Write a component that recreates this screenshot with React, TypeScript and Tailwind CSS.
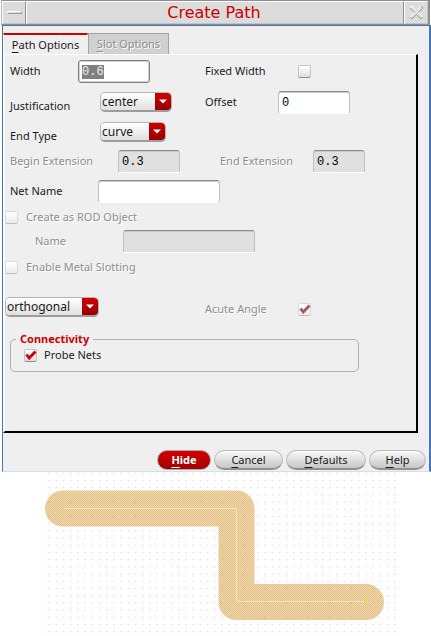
import { useEffect, useRef } from "react";
import type { ReactNode } from "react";

const fieldBase =
  "block rounded-[3px] border border-t-[#8e8e8e] border-x-[#c0c0c0] border-b-white px-[3px] pt-[2px] font-['Liberation_Mono','DejaVu_Sans_Mono',monospace] text-[12px] leading-4 text-black shadow-[inset_0_1px_0_#c9c9c9] outline-none h-[23px]";

function TextField({ id, value, className, disabled }: { id: string; value: string; className: string; disabled?: boolean }) {
  return (
    <input
      id={id}
      type="text"
      defaultValue={value}
      disabled={disabled}
      className={`${fieldBase} ${disabled ? "bg-[#e0e0e0]" : "bg-white"} ${className}`}
    />
  );
}

function Combo({ id, options, className, label }: { id: string; options: string[]; className: string; label?: string }) {
  return (
    <div className={`relative h-5 overflow-hidden rounded-[5px] border border-b-2 border-[#b4b4b4] border-b-[#9c9c9c] ${className}`}>
      <select
        id={id}
        aria-label={label}
        className="block h-full w-full appearance-none bg-linear-to-b from-white to-[#e0e0e0] pl-px text-[12px] leading-4 text-[#1a1a1a] outline-none"
      >
        {options.map((o) => (
          <option key={o}>{o}</option>
        ))}
      </select>
      <span className="pointer-events-none absolute inset-y-0 right-0 flex w-4 items-center justify-center bg-linear-to-b from-[#cf0000] to-[#980000]">
        <svg width="8" height="5" viewBox="0 0 8 5" aria-hidden="true">
          <path d="M0 0.5h8L4 4.5z" fill="#fff" />
        </svg>
      </span>
    </div>
  );
}

function Check({ id, checked, disabled }: { id: string; checked?: boolean; disabled?: boolean }) {
  return (
    <span className="relative block size-[13px] shrink-0">
      <input
        id={id}
        type="checkbox"
        defaultChecked={checked}
        disabled={disabled}
        className="peer block size-full appearance-none rounded-[2px] border border-[#c4c4c4] border-b-[#8f8f8f] bg-linear-to-b from-white to-[#dedede] disabled:border-[#dadada] disabled:border-b-[#bdbdbd] disabled:to-[#ececec]"
      />
      <svg
        viewBox="0 0 13 13"
        aria-hidden="true"
        className={`pointer-events-none absolute inset-0 hidden peer-checked:block ${disabled ? "text-[#a65a5a]" : "text-[#cc0000]"}`}
      >
        <path d="M2.5 5.5 5.2 9 11.5 2.5" fill="none" stroke="currentColor" strokeWidth="2.8" />
      </svg>
    </span>
  );
}

function Label({ htmlFor, className = "", dim, children }: { htmlFor: string; className?: string; dim?: boolean; children: ReactNode }) {
  return (
    <label
      htmlFor={htmlFor}
      className={`shrink-0 whitespace-nowrap ${dim ? "text-[#8e8e8e] [text-shadow:1px_1px_0_#fff]" : "text-[#1a1a1a]"} ${className}`}
    >
      {children}
    </label>
  );
}

function Mnemonic({ text }: { text: string }) {
  return (
    <span>
      <span className="underline underline-offset-3">{text[0]}</span>
      {text.slice(1)}
    </span>
  );
}

function PushButton({ text, className }: { text: string; className: string }) {
  return (
    <button
      type="button"
      className={`h-5 rounded-full border border-b-2 border-[#bcbcbc] border-b-[#909090] bg-linear-to-b from-[#fafafa] to-[#c6c6c6] text-[#1a1a1a] ${className}`}
    >
      <Mnemonic text={text} />
    </button>
  );
}

function TitleBar() {
  return (
    <header className="ml-px mr-px flex h-[25px] border border-t border-r-2 border-[#8f8f8f] border-l-[#b5b5b5] bg-[#dcdcdc]">
      <button type="button" aria-label="Window menu" className="flex w-6 items-center justify-center border border-t-white border-l-white border-r-[#8f8f8f] border-b-[#c4c4c4]">
        <span className="h-[3px] w-[15px] border border-t-white border-l-white border-r-[#999] border-b-[#999]" />
      </button>
      <h1 className="flex flex-1 items-center justify-center border border-t-white border-l-white border-r-[#8f8f8f] border-b-[#c4c4c4] pr-[2px] font-['DejaVu_Sans',sans-serif] text-[16px] leading-5 text-[#cc0000]">
        Create Path
      </h1>
      <button type="button" aria-label="Close" className="flex w-6 items-center justify-center border border-t-white border-l-white border-r-[#c4c4c4] border-b-[#c4c4c4]">
        <svg width="15" height="15" viewBox="0 0 15 15" aria-hidden="true">
          <path d="M1 3 3 1 7.5 5.5 12 1 14 3 9.5 7.5 14 12 12 14 7.5 9.5 3 14 1 12 5.5 7.5z" fill="#dcdcdc" stroke="#999" />
          <path d="M1 3 3 1 7.5 5.5 12 1M5.5 7.5 1 12M9.5 7.5 14 12" fill="none" stroke="#fff" />
        </svg>
      </button>
    </header>
  );
}

function LayoutCanvas() {
  return (
    <svg viewBox="0 472 431 164" className="block h-auto w-full" role="img" aria-label="Routed path">
      <defs>
        <pattern id="grid" x="48.5" y="472.7" width="7.2" height="7.2" patternUnits="userSpaceOnUse">
          <rect width="1.1" height="1.1" fill="#d2d2d2" />
        </pattern>
        <pattern id="griddark" x="48.5" y="472.7" width="21.6" height="14.4" patternUnits="userSpaceOnUse">
          <rect width="1.1" height="1.1" fill="#c9a873" />
        </pattern>
        <pattern id="metal" width="2" height="2" patternUnits="userSpaceOnUse">
          <rect width="2" height="2" fill="#f0d5a8" />
          <rect width="1" height="1" fill="#e4c28c" />
          <rect x="1" y="1" width="1" height="1" fill="#e4c28c" />
        </pattern>
      </defs>
      <rect x="44" y="472" width="352" height="164" fill="#fefefe" />
      <rect x="48" y="472" width="348" height="160" fill="url(#grid)" />
      <path d="M63 508.500H236.500V602H366" fill="none" stroke="url(#metal)" strokeWidth="36" strokeLinecap="round" strokeLinejoin="round" />
      <path d="M63 508.500H236.500V602H366" fill="none" stroke="url(#griddark)" strokeWidth="34" strokeLinecap="round" strokeLinejoin="round" />
      <path d="M63 508.500H236.500V601.500H366" fill="none" stroke="#f9e4c0" strokeWidth="1" />
      <path d="M364 601.500h4M366 600v3" stroke="#f0dc3c" strokeWidth="1.500" />
    </svg>
  );
}

export default function App() {
  const widthRef = useRef<HTMLInputElement>(null);
  useEffect(() => {
    widthRef.current?.focus();
    widthRef.current?.select();
  }, []);

  return (
    <div className="min-h-screen bg-white font-['Noto_Sans','Open_Sans',sans-serif] text-[11px] leading-4">
      <TitleBar />
      <main className="ml-[2px] border-t border-r-2 border-b border-l border-[#4677b5] border-b-[#d3dff0] bg-[#efefef]">
        <div className="flex pt-[7px]" role="tablist">
          <button type="button" role="tab" aria-selected="true" className="h-[21px] w-[85px] border-x border-t-2 border-t-[#cc0000] border-r-transparent border-l-white text-[#1a1a1a]">
            <Mnemonic text="Path Options" />
          </button>
          <button type="button" role="tab" aria-selected="false" disabled className="h-[21px] w-[81px] border border-b-0 border-[#a3a3a3] bg-[#d0d0d0] text-[#8e8e8e] [text-shadow:1px_1px_0_#fff]">
            <Mnemonic text="Slot Options" />
          </button>
        </div>

        <section className="mr-[11px] border-2 border-t border-white border-r-black border-b-black pb-[59px]">
          <div className="flex h-8 items-center pl-[5px]">
            <Label htmlFor="width" className="w-[68px]">Width</Label>
            <input
              id="width"
              ref={widthRef}
              type="text"
              defaultValue="0.6"
              className="block h-[23px] w-[72px] rounded-[3px] border border-[#808080] bg-white px-[3px] pt-[2px] font-['Liberation_Mono','DejaVu_Sans_Mono',monospace] text-[12px] leading-4 text-black shadow-[inset_0_0_0_1px_#d0d0d0] outline-none selection:bg-[#808080] selection:text-[#e4f0f0]"
            />
            <Label htmlFor="fixed" className="ml-[55px] w-[93px]">Fixed Width</Label>
            <Check id="fixed" />
          </div>
          <div className="flex h-[30px] items-center pl-[5px]">
            <Label htmlFor="just" className="w-[90px] pt-2">Justification</Label>
            <Combo id="just" options={["center", "left", "right"]} className="w-[72px]" />
            <Label htmlFor="offset" className="ml-[33px] w-[73px]">Offset</Label>
            <TextField id="offset" value="0" className="w-[72px]" />
          </div>
          <div className="flex h-[30px] items-center pl-[5px]">
            <Label htmlFor="end" className="w-[90px] pt-2">End Type</Label>
            <Combo id="end" options={["curve", "flush", "square"]} className="w-[66px]" />
          </div>
          <div className="flex h-7 items-center pl-[5px]">
            <Label htmlFor="begin-ext" dim className="w-[108px]">Begin Extension</Label>
            <TextField id="begin-ext" value="0.3" disabled className="w-[62px]" />
            <Label htmlFor="end-ext" dim className="ml-10 w-[93px]">End Extension</Label>
            <TextField id="end-ext" value="0.3" disabled className="w-[52px]" />
          </div>
          <div className="flex h-8 items-center pl-[5px]">
            <Label htmlFor="net" className="w-[88px]">Net Name</Label>
            <TextField id="net" value="" className="w-[122px]" />
          </div>
          <div className="flex h-5 items-center gap-2">
            <Check id="rod" disabled />
            <Label htmlFor="rod" dim>Create as ROD Object</Label>
          </div>
          <div className="flex h-7 items-center pl-[30px]">
            <Label htmlFor="rod-name" dim className="w-[88px]">Name</Label>
            <TextField id="rod-name" value="" disabled className="w-[132px]" />
          </div>
          <div className="flex h-6 items-center gap-2">
            <Check id="slotting" disabled />
            <Label htmlFor="slotting" dim>Enable Metal Slotting</Label>
          </div>
          <div className="mt-4 flex h-6 items-center">
            <Combo id="snap" label="Snap mode" options={["orthogonal", "diagonal", "anyAngle"]} className="w-[94px]" />
            <div className="ml-[106px] flex items-center pt-1">
              <Label htmlFor="acute" dim className="w-[93px]">Acute Angle</Label>
              <Check id="acute" checked disabled />
            </div>
          </div>
          <fieldset className="mt-3 mr-[57px] ml-[5px] h-[41px] rounded-[5px] border border-[#b0b0b0] pl-[13px]">
            <legend className="-ml-2 px-1 font-bold text-[#cc0000]">Connectivity</legend>
            <div className="flex items-center gap-[7px]">
              <Check id="probe" checked />
              <Label htmlFor="probe">Probe Nets</Label>
            </div>
          </fieldset>
        </section>

        <div className="flex justify-end gap-[3px] pt-[17px] pr-[3px] pb-px">
          <button type="button" className="h-5 w-[54px] rounded-full border border-[#a9a9a9] bg-linear-to-b from-[#d40000] to-[#a30000] font-bold text-white">
            <Mnemonic text="Hide" />
          </button>
          <PushButton text="Cancel" className="w-[69px]" />
          <PushButton text="Defaults" className="w-[80px]" />
          <PushButton text="Help" className="w-[57px]" />
        </div>
      </main>
      <LayoutCanvas />
    </div>
  );
}
